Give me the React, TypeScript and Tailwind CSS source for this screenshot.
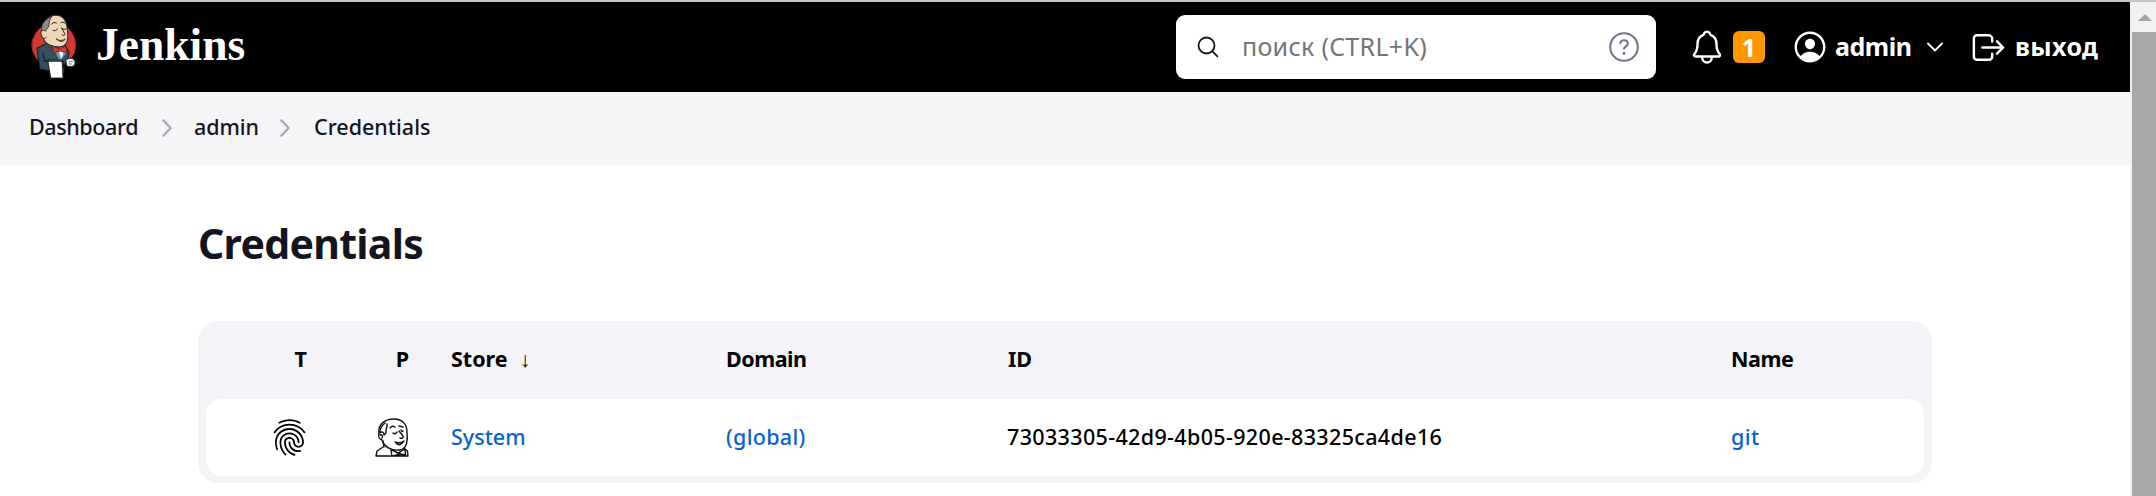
import { IoFingerPrintOutline, IoLogOutOutline, IoNotificationsOutline, IoPersonCircleOutline } from "react-icons/io5";

function Butler() {
  return (
    <svg viewBox="0 0 46 66" className="h-[66px] w-[46px] shrink-0" strokeLinejoin="round" strokeLinecap="round">
      <circle cx="23" cy="31" r="21.8" fill="#d33833" />
      <path d="M1.500 25 A22 22 0 0 0 9 48" fill="none" stroke="#a52a28" strokeWidth="1" />
      <path d="M6 34 L17 29 L34 31 L38 38 L36 50 L20 51 L20 57 L9 55 Z" fill="#335061" stroke="#16222b" strokeWidth="1.200" />
      <path d="M23 36 L29 47 L36 38 L31 33 Z" fill="#6f9fb4" />
      <path d="M27 35 L30.500 45 L33 36 Z" fill="#fff" />
      <path d="M11.500 20 C11 9 16 1.300 25 1.300 C33 1.300 36 8 36.500 17 C37.500 25 37 31.500 30.500 32.500 C24 33.500 15 31 13 26 Z" fill="#f0d6b7" stroke="#312b27" strokeWidth="1.100" />
      <path d="M17 4.500 C12 7 9.500 13 11 18 L14 18 C14 15 18 15 18 11 C18 8 19 5 21 2.300 Z" fill="#8b8987" stroke="#312b27" strokeWidth=".8" />
      <path d="M15 17 C11 15 9 18 10.500 21 C11.500 25 14 25 15.500 23" fill="#f0d6b7" stroke="#312b27" strokeWidth=".9" />
      <path d="M20.500 10 Q23 7 25.500 9 M30 8.500 Q32 7 34 9 M22 16.500 Q24.500 18 26.500 15 M31 14.500 Q33 16.500 35 15 M30.500 14 L34 20 Q34.500 22 31 21 M25.500 25 Q29.500 28 34.500 25 Q30.500 30 25.500 25" fill="none" stroke="#312b27" strokeWidth="1" />
      <path d="M21.500 32 L28 35 L35 32 L36 39 L29 37 L23 39 Z" fill="#d33833" stroke="#701f1d" strokeWidth=".8" />
      <path d="M17 46 L31 46 L32 64 L20 64 Z" fill="#fff" stroke="#222" strokeWidth=".9" />
      <path d="M12 39 L13.500 47 L32 47 L33 51" fill="none" stroke="#16222b" strokeWidth="1.300" />
      <path d="M35 46 C38 43 44 44 44 48 C44 53 41 53 36 52 Z" fill="#fff" stroke="#222" strokeWidth="1" />
      <path d="M38 48 L42 47 M38 50 L41 50 M32 59 L33 53" fill="none" stroke="#555" strokeWidth=".8" />
    </svg>
  );
}

function ButlerOutline() {
  return (
    <svg viewBox="0 0 34 39" className="h-[39px] w-[34px]" fill="none" stroke="#111" strokeWidth="1.400" strokeLinejoin="round" strokeLinecap="round">
      <path d="M7 22 C4 21 3 18 4 15 C3 6 10 1 19 1 C28 1 32 7 32 14 C33 22 32 32 24 32 C15 33 9 28 7 22 Z" />
      <path d="M10 5 C5 9 5 12 4.500 15 C7 13 9 14 9 17 L11 15 C10 12 13 9 12 6 M5 17 C7 16 8 18 7 20" />
      <path d="M15 10 Q17 7 20 9 M24 8 L28 9 M18 15 Q20 17 22 14 M26 12 Q27 14 28 13 M24 13 L28 18 Q29 21 25 20 M20 24 Q25 26 29 23 Q25 30 20 24 M8 23 L9 29" />
      <path d="M8 29 L2 33 L1 38 H33 L32.500 33 L29 30 M16 32 L17 38 M17 32 L23 35 L30 31 L30.500 37 L25 36 L18 38 M23 35 V38 M25 33 V37" />
    </svg>
  );
}

function Separator() {
  return (
    <svg viewBox="0 0 10 18" className="h-[18px] w-[10px]" fill="none" stroke="#a5a5bb" strokeWidth="2.200" strokeLinecap="round" strokeLinejoin="round">
      <path d="M1.300 1.300 8.700 9l-7.400 7.700" />
    </svg>
  );
}

export default function App() {
  return (
    <div className="flex h-[496px] w-[2156px] flex-col overflow-hidden bg-white font-['Noto_Sans',sans-serif]">
      <div className="h-[2px] shrink-0 bg-[#c6c6c6]" />
      <div className="flex flex-1">
        <div className="flex w-[2130px] flex-col">
          <header className="flex h-[90px] items-center bg-black pl-[31px] text-white">
            <Butler />
            <span className="ml-[19px] w-[1080px] shrink-0 pb-[5px] font-['Liberation_Serif',serif] text-[45.500px] leading-none font-bold">Jenkins</span>
            <div className="flex h-[64px] w-[480px] shrink-0 items-center rounded-[9px] bg-white pl-[21px]">
              <svg viewBox="0 0 22 22" className="h-[22px] w-[22px] shrink-0" fill="none" stroke="#14141f" strokeWidth="1.800" strokeLinecap="round">
                <circle cx="9.500" cy="9.500" r="8" /><path d="m15.400 15.400 5 5" />
              </svg>
              <div className="ml-[23px] w-[367px] text-[25px] tracking-[0.3px] text-[#757575]">поиск (CTRL+K)</div>
              <svg viewBox="0 0 30 30" className="h-[30px] w-[30px] shrink-0" fill="none" stroke="#73738c" strokeWidth="2.100" strokeLinecap="round">
                <circle cx="15" cy="15" r="13.800" />
                <path d="M11.300 11.200c.3-2 1.800-3 3.700-3 2.200 0 3.800 1.300 3.800 3.200 0 2.800-3.600 2.900-3.800 5.400" />
                <circle cx="15" cy="21.200" r="1.500" fill="#73738c" stroke="none" />
              </svg>
            </div>
            <IoNotificationsOutline className="ml-[32px] h-[38px] w-[38px] shrink-0" />
            <div className="ml-[7px] flex h-[32px] w-[32px] shrink-0 items-center justify-center rounded-[6px] bg-[#ff9800] text-[25px] leading-none font-bold">1</div>
            <IoPersonCircleOutline className="ml-[26px] h-[38px] w-[38px] shrink-0" />
            <div className="ml-[6px] w-[92px] shrink-0 text-[25px] font-bold tracking-[-0.5px]">admin</div>
            <svg viewBox="0 0 16 10" className="h-[10px] w-[16px] shrink-0" fill="none" stroke="#fff" strokeWidth="1.800" strokeLinecap="round" strokeLinejoin="round"><path d="m1 1.500 7 7 7-7" /></svg>
            <IoLogOutOutline className="ml-[26px] h-[39px] w-[39px] shrink-0" />
            <div className="ml-[7px] text-[25px] font-bold tracking-[0.4px]">выход</div>
          </header>
          <nav className="flex h-[73px] items-center bg-[#f5f5f8] pb-[2px] pl-[29px] text-[21.500px] font-medium text-[#14141f]">
            <div className="w-[133px] tracking-[-0.4px]">Dashboard</div>
            <Separator />
            <div className="ml-[22px] w-[86px] tracking-[-0.1px]">admin</div>
            <Separator />
            <div className="ml-[24px]">Credentials</div>
          </nav>
          <main className="px-[198px]">
            <h1 className="mt-[48px] text-[41px] leading-[60px] font-bold tracking-[-0.700px] text-[#14141f]">Credentials</h1>
            <div className="mt-[48px] h-[162px] rounded-[20px] bg-[#f3f3f8] px-[8px] text-[21.500px]">
              <div className="grid h-[78px] grid-cols-[101px_102px_276px_281px_723px_1fr] items-center pb-[2px] font-bold">
                <div className="text-right">T</div>
                <div className="text-right">P</div>
                <div className="pl-[42px]">Store<span className="ml-3 font-normal">↓</span></div>
                <div className="pl-[41px] tracking-[-0.5px]">Domain</div>
                <div className="pl-[42px]">ID</div>
                <div className="pl-[42px] tracking-[-0.400px]">Name</div>
              </div>
              <div className="grid h-[77px] grid-cols-[103px_100px_276px_281px_723px_1fr] items-center rounded-[16px] bg-white font-medium">
                <div className="flex justify-end"><IoFingerPrintOutline className="h-[39px] w-[39px]" /></div>
                <div className="flex justify-end"><ButlerOutline /></div>
                <div className="pl-[42px] text-[#0563d2]">System</div>
                <div className="pl-[41px] tracking-[0.300px] text-[#0563d2]">(global)</div>
                <div className="pl-[41px] tracking-[0.350px]">73033305-42d9-4b05-920e-83325ca4de16</div>
                <div className="pl-[42px] tracking-[0.400px] text-[#0563d2]">git</div>
              </div>
            </div>
          </main>
        </div>
        <div className="flex w-[26px] flex-col bg-[#f1f1f1]">
          <svg viewBox="0 0 26 30" className="h-[30px] w-[26px] shrink-0"><path d="m8 19 7-7 7 7Z" fill="#a3a3a3" /></svg>
          <div className="ml-[2px] flex-1 bg-[#a8a8a8]" />
        </div>
      </div>
    </div>
  );
}
